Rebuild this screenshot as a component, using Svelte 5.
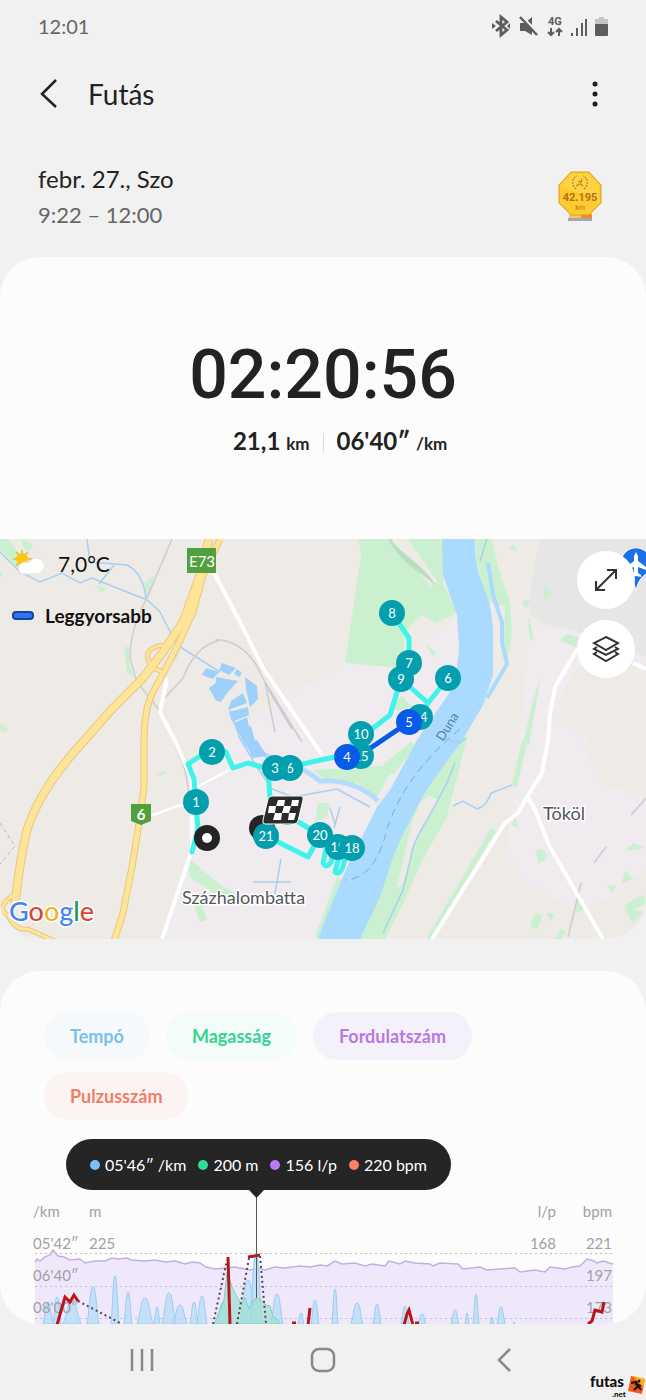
<script>
    let duration = '02:20:56';
    let selected = { Tempó: true, Magasság: true, Fordulatszám: true, Pulzusszám: true };

    const series = [
        { name: 'Tempó', kind: 'pace' },
        { name: 'Magasság', kind: 'elevation' },
        { name: 'Fordulatszám', kind: 'cadence' },
        { name: 'Pulzusszám', kind: 'pulse' }
    ];

    const readings = [
        { text: '05\'46″ /km', kind: 'pace' },
        { text: '200 m', kind: 'elevation' },
        { text: '156 l/p', kind: 'cadence' },
        { text: '220 bpm', kind: 'pulse' }
    ];

    // kilometre markers, in drawing order
    const markers = [
        { x: 392, y: 74, label: '8' },
        { x: 409, y: 124, label: '7' },
        { x: 401, y: 140, label: '9' },
        { x: 448, y: 139, label: '6' },
        { x: 420, y: 178, label: '14' },
        { x: 409, y: 183, label: '5', fast: true },
        { x: 361, y: 217, label: '15' },
        { x: 361, y: 195, label: '10' },
        { x: 347, y: 218, label: '4', fast: true },
        { x: 290, y: 229, label: '6' },
        { x: 275, y: 229, label: '3' },
        { x: 212, y: 213, label: '2' },
        { x: 196, y: 263, label: '1' },
        { x: 266, y: 297, label: '21' },
        { x: 320, y: 296, label: '20' },
        { x: 338, y: 308, label: '19' },
        { x: 352, y: 309, label: '18' }
    ];

    // pace peaks: centre, top, half width
    const peaks = [
        [48, 112, 5], [57, 107, 4], [72, 112, 9], [93, 97, 6], [115, 86, 4], [128, 102, 4],
        [145, 108, 8], [157, 117, 3], [169, 103, 7], [180, 115, 7], [194, 112, 4], [202, 106, 5],
        [223, 112, 6], [248, 90, 8], [256, 64, 6], [277, 104, 6], [301, 123, 3], [315, 110, 4],
        [335, 99, 3], [357, 113, 6], [377, 114, 4], [405, 116, 4], [422, 124, 4], [455, 120, 4],
        [467, 123, 2], [476, 104, 3], [492, 127, 2], [501, 117, 4], [514, 132, 1]
    ];

    const cadence = '35,72 37,69 40,71 45,67 50,65 53,60 58,66 64,67 70,70 80,69 85,73 95,71 105,71 112,68 118,69 127,68 131,70 145,71 155,70 165,72 175,71 185,74 192,72 200,73 206,77 215,79 225,78 235,77 240,78 250,80 258,78 265,80 275,77 285,78 300,76 310,77 320,75 327,76 335,71 342,74 355,73 365,76 372,74 385,76 389,71 400,74 405,71 415,73 430,74 433,76 440,73 458,74 463,79 480,77 487,80 500,79 515,78 520,82 535,80 545,82 550,77 565,79 572,77 580,76 587,69 594,71 597,73 603,71 613,74';

    function peakPath([x, top, half]) {
        const mid = (top + 134) / 2;
        return `M${x - half} 134C${x - half / 2} ${mid} ${x - half / 2} ${top} ${x} ${top}S${x + half / 2} ${mid} ${x + half} 134Z`;
    }

    function toggle(name) {
        selected[name] = !selected[name];
    }
</script>

<svelte:head>
    <title>Futás</title>
</svelte:head>

<main class="screen">
    <div class="statusbar">
        <span>12:01</span>
        <svg width="118" height="24" viewBox="0 0 118 24" fill="#5d5d5d">
            <path d="M4 7l11 9-6 5V3l6 5L4 17" fill="none" stroke="#5d5d5d" stroke-width="2.800" />
            <path d="M0 9l4 3-4 3zM18 9l-3 3 3 3z" />
            <path d="M28 9h5l7-6v18l-7-4h-5z" />
            <path d="M28 1l20 20" stroke="#f1f1f1" stroke-width="3" />
            <path d="M28 3l17 18" stroke="#5d5d5d" stroke-width="2.500" />
            <text x="56" y="11" class="network">4G</text>
            <path d="M59 14v7M56 18l3 3 3-3M67 22v-7M64 18l3-3 3 3" fill="none" stroke="#5d5d5d" stroke-width="2" />
            <path d="M79 19h2v3h-2zM84 14h2v8h-2zM89 9h2v13h-2zM93 5h2v17h-2z" />
            <path d="M103 5h4V3h5v2h4v6h-13z" fill="#c4c4c4" />
            <rect x="103" y="10" width="13" height="12" rx="1" />
        </svg>
    </div>

    <header>
        <button class="icon" aria-label="Vissza">
            <svg width="18" height="30" viewBox="0 0 18 30"><path d="M16 1L2 15l14 13" fill="none" stroke="#222" stroke-width="2.500" /></svg>
        </button>
        <h1>Futás</h1>
        <button class="icon" aria-label="Menü">
            <svg width="6" height="26" viewBox="0 0 6 26" fill="#1d1d1d"><circle cx="3" cy="3" r="2.500" /><circle cx="3" cy="13" r="2.500" /><circle cx="3" cy="23" r="2.500" /></svg>
        </button>
    </header>

    <section class="when">
        <div>
            <p class="date">febr. 27., Szo</p>
            <p class="hours">9:22 – 12:00</p>
        </div>
        <svg width="44" height="52" viewBox="0 0 44 52">
            <path d="M11 43h22v4H11z" fill="#f8c468" />
            <path d="M23 43h11v5H23z" fill="#e98b35" />
            <path d="M10 47h24v3H10z" fill="#aaa5a6" />
            <path d="M13 1h18l12 13v18L31 44H13L1 32V14z" fill="#fdcb31" stroke="#d99e19" />
            <path d="M14 3h16l11 12v16L3 15z" fill="#ffd951" opacity=".6" />
            <g fill="none" stroke="#b98515" stroke-width="1.200">
                <path d="M18 18c-5-4-4-11 1-13M26 18c5-4 4-11-1-13" stroke-dasharray="2 1" />
                <path d="M24 8l-2 5 3 2M20 10l4 1M21 13l-3 2" />
            </g>
            <text x="22" y="30" class="medal">42.195</text>
            <text x="22" y="39" class="medal-unit">km</text>
        </svg>
    </section>

    <section class="summary">
        <div class="duration">{duration}</div>
        <div class="totals">
            <p>21,1 <small>km</small></p>
            <span class="divider"></span>
            <p>06'40″ <small>/km</small></p>
        </div>
    </section>

    <section class="map">
        <svg class="canvas" viewBox="0 0 646 400">
            <rect width="646" height="400" fill="#eeebe7" />

            <g fill="#efebef">
                <path d="M184 225L290 155L345 124H400L460 75V150L380 260L325 400H162L190 320Z" />
                <path d="M530 84L646 110V225L600 215L578 201L600 240L646 260V330L610 360L570 370L530 345L505 315L515 250Z" />
            </g>
            <path d="M540 0L531 46L530 76L544 84L570 90L646 118V0Z" fill="#e6e6e6" />
            <path d="M590 200Q585 235 612 250L646 248V130L600 112Q555 140 560 185Z" fill="#eeebe7" />

            <g fill="#caf0d0">
                <path d="M0 0H8L25 22L15 27L0 10ZM22 0L34 6L28 12L22 7ZM0 32L3 35L0 38Z" />
                <path d="M144 44L155 36L151 52L146 60ZM95 46L108 50L101 53Z" />
                <path d="M124 108H129L130 127L134 140L127 133ZM180 108L176 124L173 118Z" />
                <path d="M0 184L8 190L4 194L0 191ZM157 237L163 232L167 233L161 237Z" />
                <path d="M358 0L361 16L345 124L402 129L405 92L422 76L435 84L457 74L443 44V0H408L437 42L430 47L391 0Z" />
                <path d="M313 231L395 226L377 258L357 244H330ZM318 264H330L327 277L315 284ZM188 319L222 347L243 358L246 364L226 363L190 338ZM191 356L198 354L207 381L200 383Z" />
                <path d="M475 0H492L498 28L510 64L512 93L508 119L503 116L505 67L487 63L477 23Z" />
                <path d="M454 204L468 195L447 278L423 320L400 371L385 400H357L380 355L393 316L417 266Z" />
                <path d="M529 78L534 100L530 101L528 80ZM523 61H530L528 69L523 67ZM544 47L553 54L544 61ZM561 99L567 95L579 98L577 108L562 103Z" />
                <path d="M541 136L529 206H523L532 165ZM522 201H528L517 248L512 246ZM491 289L496 292L430 400H426Z" />
                <path d="M535 312L542 309L548 318L539 325ZM515 276L518 288L512 286ZM578 358L584 371L575 374ZM536 374L543 376L537 391L530 387ZM546 374L555 374L551 383ZM561 390L566 392L561 400H554Z" />
                <path d="M627 309L634 304L645 309L629 312ZM625 331L633 340L622 345ZM607 346L616 347L612 355ZM624 367L643 355L646 364L634 371L644 373L632 384Z" />
                <path d="M391 164L402 157L412 167L397 172ZM425 104L436 114L433 118ZM513 5L518 12L509 11Z" />
                <path d="M315 398L338 336L343 345L326 400ZM383 226L412 202L415 208L393 236Z" />
            </g>
            <path d="M391 0C400 15 424 25 436 47L428 40C415 30 400 22 388 0Z" fill="#b7dfc0" />
            <path d="M430 257L438 261L417 298L403 345L397 348L412 283L421 262Z" fill="#eeebe7" />

            <path d="M442 0H475Q474 25 483 46Q492 65 493 92V136L483 166L460 205Q430 243 417 268Q400 300 393 318L380 358L360 400H318L327 376L347 328L377 268L390 251L417 201L443 163Q458 145 459 106L457 76L443 36Z" fill="#abdaff" />
            <path d="M488 24L493 56L502 83V103L507 125L497 142L487 159" fill="none" stroke="#abdaff" stroke-width="4" />
            <path d="M246 206Q270 220 281 221Q298 225 320 242Q355 240 378 262" fill="none" stroke="#b4dcfb" stroke-width="5" />
            <g fill="#9dd0fa">
                <path d="M206 129L219 133L213 140L202 136ZM209 149L220 141L221 163L215 160ZM222 124L236 129L229 136L219 131Z" />
                <path d="M216 138L238 142L228 153L221 163L215 161ZM231 162L243 154L247 164L228 171ZM229 173L248 168L249 176L232 183ZM234 184L247 178L250 192L240 196Z" />
                <path d="M237 130L242 134L239 138L234 135ZM245 138L257 147L258 160L250 168L246 150ZM237 190L251 187L255 202L245 207ZM246 204L257 201L267 217L252 219Z" />
            </g>
            <g fill="none" stroke="#a9cff0" stroke-width="1.500">
                <path d="M0 13L20 33L40 43L62 34L80 44L92 39L147 61L160 73L177 106L220 133M87 0L90 23L127 26Q143 34 146 59M114 26L99 45" />
                <path d="M230 171L240 200L257 228L272 250L293 258L337 250L370 268M330 269L335 285M340 268L334 289M253 343H291M281 320L274 360" />
                <path d="M455 224L447 244L427 281Q412 305 411 318L403 351L383 394M453 267L463 262L477 270Q487 267 491 254L512 246M487 0L480 22M443 199L460 204L466 199" />
            </g>

            <g fill="none" stroke="#cccbd0" stroke-width="1.500">
                <path d="M172 0L147 59Q130 90 130 119L137 143L163 176L183 225Q190 245 193 310M220 101Q195 107 183 139L165 159" />
                <path d="M215 101Q238 100 255 124L265 143L275 193M265 143L302 203M268 150L292 190M631 276L646 259M594 324L606 308M581 344L568 398" />
            </g>
            <path d="M0 284L15 307L0 325" fill="none" stroke="#b8b8ba" stroke-dasharray="4 3" />
            <path d="M460 190Q405 235 387 290Q375 340 345 341" fill="none" stroke="#7fa9cf" stroke-dasharray="8 5" />

            <g fill="none" stroke="#fff" stroke-width="4">
                <path d="M167 139L160 173L176 204L192 241V311L162 400M213 32L240 83L263 129L322 216" />
                <path d="M193 250L233 229M140 281L177 267L190 266" stroke-width="2.500" />
                <path d="M590 104L577 111L555 148L550 175L548 201L542 234L527 258L518 274L505 284L432 400M528 259L535 271L550 308L603 400M633 124L646 130" />
            </g>

            <g fill="none" stroke="#e9c77b" stroke-width="7">
                <path d="M163 106Q145 109 148 120Q150 130 166 134M15 355Q-6 369 8 376Q15 392 28 390L57 403" stroke-width="5" />
                <path d="M220 0L203 36L193 73L178 106L166 129L153 153Q144 170 144 204V248L140 278L132 328L123 374L114 402" />
                <path d="M209 0L200 36L183 83L163 113L143 139L113 169L82 204Q40 250 27 291Q20 320 15 365" stroke-width="9" />
            </g>
            <g fill="none" stroke="#fee498" stroke-width="5">
                <path d="M163 106Q145 109 148 120Q150 130 166 134M15 355Q-6 369 8 376Q15 392 28 390L57 403" stroke-width="3" />
                <path d="M220 0L203 36L193 73L178 106L166 129L153 153Q144 170 144 204V248L140 278L132 328L123 374L114 402" />
                <path d="M209 0L200 36L183 83L163 113L143 139L113 169L82 204Q40 250 27 291Q20 320 15 365" stroke-width="7" />
            </g>

            <rect x="187" y="9" width="29" height="25" fill="#529f3d" />
            <text x="202" y="28" class="shield">E73</text>
            <path d="M131 265H151V282L141 286L131 282Z" fill="#529f3d" />
            <text x="141" y="281" class="shield bold">6</text>

            <text x="182" y="365" class="place">Százhalombatta</text>
            <text x="543" y="281" class="place">Tököl</text>
            <text x="443" y="203" class="river" transform="rotate(-58 443 203)">Duna</text>
            <text x="9" y="382" class="google"><tspan fill="#4285f4">G</tspan><tspan fill="#db4437">o</tspan><tspan fill="#edb51f">o</tspan><tspan fill="#4285f4">g</tspan><tspan fill="#229957">l</tspan><tspan fill="#db4437">e</tspan></text>

            <g fill="none" stroke="#3ff3eb" stroke-width="5" stroke-linejoin="round" stroke-linecap="round">
                <path d="M192 313L198 290L194 240L188 225L212 209L226 213L233 229L248 224L262 228H289L330 219L361 213L345 211L390 176L397 153L401 140L409 124V99L392 74" />
                <path d="M401 140L428 164L448 139M428 164L421 178M268 229L270 260M290 278L320 296L308 318L266 297" />
                <path d="M326 310L323 324Q327 330 331 323L334 314M340 314L335 333Q341 338 345 320" />
            </g>
            <path d="M347 218L372 208L409 183" fill="none" stroke="#075be8" stroke-width="5" />

            <circle cx="262" cy="289" r="13" fill="#242424" />
            <circle cx="287" cy="273" r="13" fill="#039fae" />
            {#each markers as m}
                <circle cx={m.x} cy={m.y} r="13" fill={m.fast ? '#075be8' : '#039fae'} />
                <text x={m.x} y={m.y + 5} class="km">{m.label}</text>
            {/each}
            <circle cx="207" cy="299" r="9" fill="#fff" stroke="#242424" stroke-width="8" />
            <path d="M272 257H301Q304 257 303 261L298 282Q297 285 294 285H265Q262 285 263 281L268 260Q269 257 272 257Z" fill="#2b2b2b" stroke="#fff" />
            <path d="M278 261H285L284 267H276ZM292 261H299L298 267H291ZM269 267H276L275 274H268ZM284 267H291L289 274H282ZM275 274H282L281 281H273ZM289 274H296L294 281H288Z" fill="#fff" />

            <path d="M636 52Q634 40 626 35A15 15 0 1 1 646 35Q638 40 636 52Z" fill="#1a72e8" stroke="#fff" />
            <path d="M636 13L638 17V22L646 28V31L638 28V34L641 36V38L636 37L631 38V36L634 34V28L626 31V28L634 22V17Z" fill="#fff" />
        </svg>

        <div class="legend">
            <p class="weather">
                <svg width="32" height="26" viewBox="0 0 32 26">
                    <path d="M10 0V17M1 9H20M4 2L16 16M16 2L4 16" stroke="#e6b23f" stroke-width="1.500" />
                    <circle cx="10" cy="9" r="6" fill="#ffc60b" />
                    <path d="M10 24A6 6 0 0 1 10 13Q14 11 17 13A8 8 0 1 1 24 24Z" fill="#fff" stroke="#e2e0e0" />
                </svg>
                7,0°C
            </p>
            <p class="fastest"><span class="swatch"></span>Leggyorsabb</p>
        </div>
        <div class="tools">
            <button aria-label="Nagyítás">
                <svg width="24" height="24" viewBox="0 0 24 24" fill="none" stroke="#333" stroke-width="2"><path d="M2 22L22 2M13 2h9v9M2 13v9h9" /></svg>
            </button>
            <button aria-label="Rétegek">
                <svg width="28" height="28" viewBox="0 0 28 28" fill="none" stroke="#333" stroke-width="2"><path d="M14 2l12 6-12 7L2 8zM5 12l-3 2 12 6 12-6-3-2M5 17l-3 2 12 7 12-7-3-2" /></svg>
            </button>
        </div>
    </section>

    <section class="details">
        <div class="chips">
            {#each series as s}
                <button class="chip {s.kind}" aria-pressed={selected[s.name]} on:click={() => toggle(s.name)}>{s.name}</button>
            {/each}
        </div>

        <div class="readings">
            {#each readings as r}
                <span class="reading"><i class="dot {r.kind}"></i>{r.text}</span>
            {/each}
        </div>

        <svg class="chart" viewBox="0 0 646 134">
            <g class="axis">
                <text x="33" y="27">/km</text>
                <text x="89" y="27">m</text>
                <text x="556" y="27" class="end">l/p</text>
                <text x="612" y="27" class="end">bpm</text>
                <text x="33" y="59">05'42″</text>
                <text x="89" y="59">225</text>
                <text x="556" y="59" class="end">168</text>
                <text x="612" y="59" class="end">221</text>
            </g>
            <path d="M35 63.500H613" stroke="#bbb" stroke-dasharray="2 3" />
            {#if selected['Fordulatszám']}
                <polygon points="35,134 {cadence} 613,134" fill="#efe8fa" />
                <polyline points={cadence} fill="none" stroke="#c4afe1" stroke-width="1.500" />
            {/if}
            <path d="M35 96.500H613M35 128.500H613" stroke="#c3bdcb" stroke-dasharray="2 3" />
            {#if selected['Tempó']}
                <g fill="#b5dcfa" fill-opacity=".75" stroke="#9acdeb">
                    {#each peaks as p}
                        <path d={peakPath(p)} />
                    {/each}
                </g>
            {/if}
            <g class="axis">
                <text x="33" y="91">06'40″</text>
                <text x="612" y="91" class="end">197</text>
                <text x="33" y="123">08'00″</text>
                <text x="612" y="123" class="end">173</text>
            </g>
            {#if selected['Magasság']}
                <path d="M214 134L220 120L224 110L227 82L232 97L237 107L241 113L245 108L249 119L254 109L260 109L266 115L270 116L273 127L277 129L280 134Z" fill="#9ee0d2" fill-opacity=".7" stroke="#7fd1bb" />
            {/if}
            {#if selected['Pulzusszám']}
                <path d="M78 111L122 134M213 134L227 70M237 134L249 68M260 66L266 134" fill="none" stroke="#4d4658" stroke-width="2" stroke-dasharray="2 3" />
                <path d="M57 135L61 121L65 107L70 112L74 105L78 111M228 67L230 135M248 67L260 65M292 133H296M308 135L310 118M404 135L407 124L409 120L413 135M415 133H419M588 134L592 131L595 120L602 122L604 112" fill="none" stroke="#b7171b" stroke-width="3" />
            {/if}
            <path d="M256.500 4V108" stroke="#555" />
            <path d="M249 0H264L256.500 8Z" fill="#252525" />
        </svg>
    </section>

    <nav>
        <button aria-label="Legutóbbiak">
            <svg width="24" height="24" viewBox="0 0 24 24"><path d="M2 1v22M12 1v22M22 1v22" stroke="#888" stroke-width="2.500" /></svg>
        </button>
        <button aria-label="Kezdőlap">
            <svg width="26" height="26" viewBox="0 0 26 26"><rect x="2" y="2" width="22" height="22" rx="7" fill="none" stroke="#888" stroke-width="2.500" /></svg>
        </button>
        <button aria-label="Vissza">
            <svg width="14" height="24" viewBox="0 0 14 24"><path d="M13 1L2 12l11 11" fill="none" stroke="#888" stroke-width="2.500" /></svg>
        </button>
        <svg class="watermark" width="58" height="34" viewBox="0 0 58 34">
            <path d="M43 10L57 13L54 28L40 25Z" fill="#f15a16" />
            <path d="M45 10L57 13L55 21Z" fill="#fdb316" />
            <circle cx="51" cy="15" r="1.500" fill="#111" />
            <path d="M43 17l5-1 2 4-4 4M47 18l6 2M50 20l3 4" fill="none" stroke="#111" stroke-width="2" />
            <text x="2" y="21">futas</text>
            <text x="24" y="31" class="net">.net</text>
        </svg>
    </nav>
</main>

<style>
    :global(body) {
        background: #f1f1f1;
    }

    .screen {
        font-family: Lato, "Open Sans", sans-serif;
        color: #222;
        background: #f1f1f1;
    }

    p, h1 {
        margin: 0;
        font-weight: 400;
    }

    button {
        font: inherit;
        border: none;
        padding: 0;
        background: none;
        cursor: pointer;
    }

    svg {
        display: block;
    }

    .statusbar {
        display: flex;
        justify-content: space-between;
        align-items: center;
        height: 52px;
        padding: 0 36px 0 38px;
        font-size: 20px;
        color: #666;
    }

    .network {
        font: 700 11px Roboto, sans-serif;
    }

    header {
        display: flex;
        align-items: center;
        height: 84px;
        padding: 0 48px 0 40px;
    }

    h1 {
        flex: 1;
        margin-left: 30px;
        font-size: 28px;
    }

    .icon {
        display: flex;
    }

    .when {
        display: flex;
        justify-content: space-between;
        align-items: center;
        height: 121px;
        padding: 0 44px 0 38px;
        line-height: 36px;
    }

    .date {
        font-size: 24px;
    }

    .hours {
        font-size: 22px;
        color: #666;
    }

    .medal {
        font: 700 11px Roboto, sans-serif;
        fill: #b3700f;
        text-anchor: middle;
    }

    .medal-unit {
        font: 7px Roboto, sans-serif;
        fill: #b3700f;
        text-anchor: middle;
    }

    .summary {
        box-sizing: border-box;
        height: 282px;
        padding-top: 84px;
        background: #fcfcfc;
        border-radius: 40px 40px 0 0;
    }

    .duration {
        font: 500 68px/68px Roboto, sans-serif;
        text-align: center;
    }

    .totals {
        display: grid;
        grid-template-columns: 1fr 1px 1fr;
        gap: 13px;
        align-items: center;
        margin-top: 16px;
        font-size: 24px;
        line-height: 32px;
    }

    .totals p {
        font-weight: 700;
    }

    .totals p:first-child {
        text-align: right;
    }

    .totals small {
        font-size: 17px;
    }

    .divider {
        height: 20px;
        background: #ddd;
    }

    .map {
        position: relative;
        overflow: hidden;
        border-radius: 0 0 40px 40px;
    }

    .canvas, .chart {
        width: 100%;
    }

    .shield {
        font-size: 15px;
        fill: #fff;
        text-anchor: middle;
    }

    .bold {
        font-weight: 700;
    }

    .place {
        font-size: 18px;
        fill: #55565a;
        stroke: #fff;
        stroke-width: 3px;
        paint-order: stroke;
    }

    .river {
        font-size: 13px;
        fill: #5580a8;
    }

    .google {
        font: 500 27px Lato, sans-serif;
        stroke: #fff;
        stroke-width: 3px;
        paint-order: stroke;
    }

    .km {
        font-size: 13px;
        fill: #fff;
        text-anchor: middle;
    }

    .legend {
        position: absolute;
        top: 8px;
        left: 12px;
        color: #111;
    }

    .weather, .fastest {
        display: flex;
        align-items: center;
        height: 32px;
        font-size: 21px;
    }

    .weather {
        gap: 14px;
    }

    .fastest {
        gap: 11px;
        margin-top: 20px;
        font-size: 19px;
        font-weight: 700;
    }

    .swatch {
        width: 18px;
        height: 5px;
        border: 2px solid #17458f;
        border-radius: 4px;
        background: #2d73f5;
    }

    .tools {
        position: absolute;
        top: 12px;
        right: 11px;
        display: grid;
        gap: 11px;
    }

    .tools button {
        display: grid;
        place-items: center;
        width: 58px;
        height: 58px;
        border-radius: 50%;
        background: #fff;
    }

    .details {
        margin-top: 32px;
        padding-top: 41px;
        overflow: hidden;
        background: #fcfcfc;
        border-radius: 40px;
    }

    .chips {
        display: flex;
        flex-wrap: wrap;
        gap: 12px 16px;
        padding: 0 44px;
        margin-right: 80px;
    }

    .chip {
        height: 48px;
        padding: 0 26px;
        border-radius: 24px;
        font-size: 18px;
        font-weight: 700;
    }

    .chip.pace {
        color: #7cbfec;
        background: #f5f9fc;
    }

    .chip.elevation {
        color: #36d393;
        background: #f3fcf9;
    }

    .chip.cadence {
        color: #b978e2;
        background: #f5f1fb;
    }

    .chip.pulse {
        color: #ef7e68;
        background: #fcf4f3;
    }

    .chip[aria-pressed="false"] {
        opacity: 0.5;
    }

    .readings {
        display: flex;
        justify-content: center;
        align-items: center;
        gap: 12px;
        width: fit-content;
        height: 51px;
        margin: 19px 0 0 66px;
        padding: 0 24px;
        border-radius: 26px;
        font-size: 16px;
        color: #fff;
        background: #252525;
    }

    .reading {
        display: flex;
        align-items: center;
        gap: 5px;
    }

    .dot {
        width: 10px;
        height: 10px;
        border-radius: 50%;
    }

    .dot.pace {
        background: #79c1fb;
    }

    .dot.elevation {
        background: #2fdf99;
    }

    .dot.cadence {
        background: #bd7af0;
    }

    .dot.pulse {
        background: #fa8068;
    }

    .axis {
        font-size: 15px;
        fill: #a2a0a4;
    }

    .end {
        text-anchor: end;
    }

    nav {
        position: relative;
        display: grid;
        grid-template-columns: repeat(3, 1fr);
        height: 76px;
        padding: 0 51px;
    }

    nav button {
        display: grid;
        place-items: center;
        height: 72px;
    }

    .watermark {
        position: absolute;
        right: 0;
        bottom: 0;
        font: 900 15px Lato, sans-serif;
        fill: #111;
    }

    .net {
        font-size: 8px;
    }
</style>
